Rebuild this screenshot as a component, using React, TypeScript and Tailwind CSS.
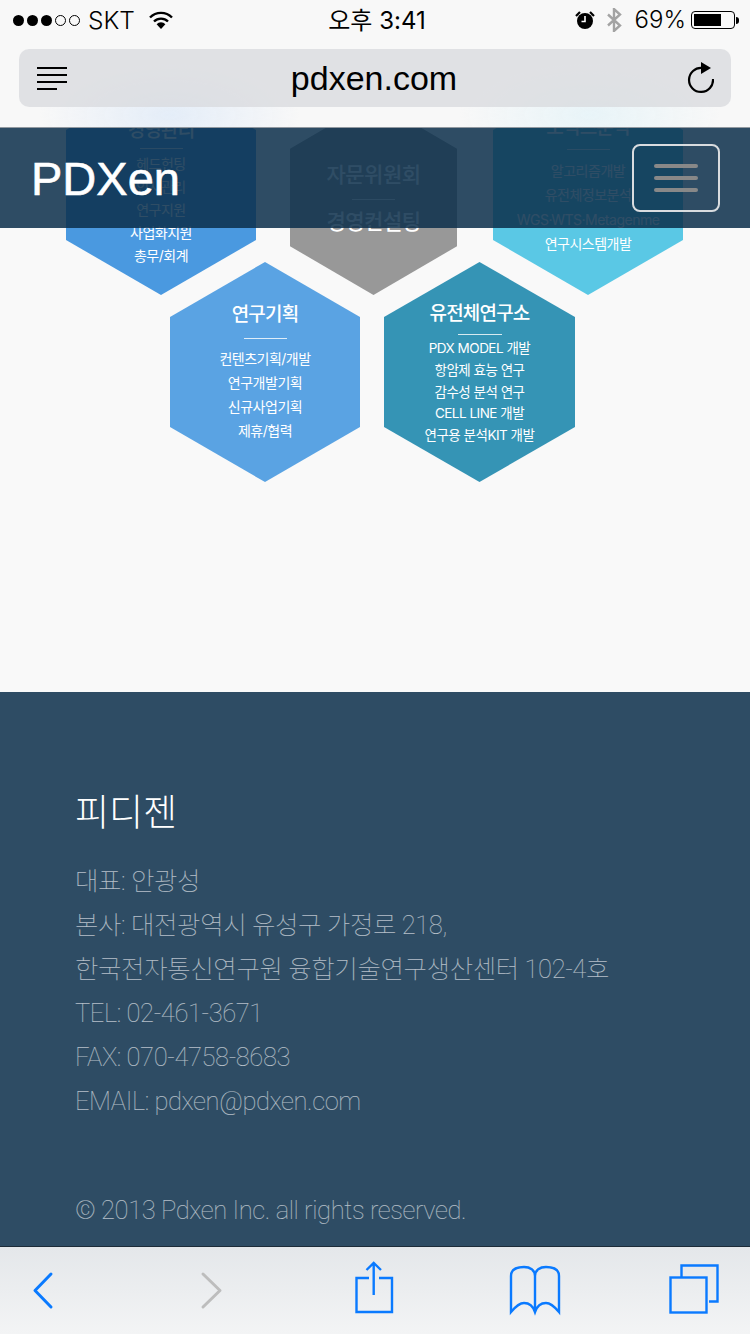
import React from "react";

const hexClip = "[clip-path:polygon(50%_0,100%_25%,100%_75%,50%_100%,0_75%,0_25%)]";

interface HexProps {
  title: string;
  items: string[];
  className: string;
  dividerClass: string;
  listClass: string;
}

const Hex: React.FC<HexProps> = ({ title, items, className, dividerClass, listClass }) => (
  <div className={`${hexClip} ${className} flex flex-col items-center text-white shrink-0`}>
    <div className="text-[19px] leading-[24px] font-medium tracking-[-0.8px]">{title}</div>
    <div className={`h-px bg-white/80 ${dividerClass}`} />
    <div className={`text-center tracking-[-0.5px] ${listClass}`}>
      {items.map((item) => (
        <div key={item}>{item}</div>
      ))}
    </div>
  </div>
);

const StatusBar = () => (
  <div className="h-[40px] flex items-center justify-between pl-[13px] pr-[11px] text-black">
    <div className="flex items-center w-[240px]">
      <div className="flex items-center gap-[3px]">
        <span className="w-[11px] h-[11px] rounded-full bg-black" />
        <span className="w-[11px] h-[11px] rounded-full bg-black" />
        <span className="w-[11px] h-[11px] rounded-full bg-black" />
        <span className="w-[11px] h-[11px] rounded-full border border-black" />
        <span className="w-[11px] h-[11px] rounded-full border border-black" />
      </div>
      <span className="ml-[8px] text-[24.500px] font-light leading-none">SKT</span>
      <svg className="ml-[14px]" width="24" height="18" viewBox="0 0 24 18">
        <path d="M1 6.500a15.500 15.500 0 0 1 22 0" fill="none" stroke="black" strokeWidth="2.400" />
        <path d="M5 10.500a10 10 0 0 1 14 0" fill="none" stroke="black" strokeWidth="2.400" />
        <path d="M7.600 13.200a6 6 0 0 1 8.800 0L12 18z" fill="black" />
      </svg>
    </div>
    <div className="mt-px ml-[2px] text-[24px] leading-none">오후 3:41</div>
    <div className="flex items-center justify-end w-[240px]">
      <svg width="20" height="18" viewBox="0 0 20 18">
        <circle cx="10" cy="10" r="8" fill="black" />
        <path d="M10 5v5.500H6.500" fill="none" stroke="white" strokeWidth="1.600" />
        <path d="M1 5l4-4M19 5l-4-4" stroke="black" strokeWidth="2.200" />
      </svg>
      <svg className="ml-[11px]" width="16" height="24" viewBox="0 0 16 24">
        <path d="M2 6.500l12 11-6 5.500V1l6 5.500-12 11" fill="none" stroke="#a3a3a3" strokeWidth="2.400" />
      </svg>
      <span className="ml-[13px] text-[24px] font-light leading-none">69%</span>
      <div className="ml-[5px] flex items-center">
        <div className="w-[44px] h-[18px] rounded-[4px] border border-black p-[2px]">
          <div className="h-full w-[27px] bg-black" />
        </div>
        <div className="ml-[1px] w-[3px] h-[7px] rounded-r-full bg-black" />
      </div>
    </div>
  </div>
);

const AddressBar = () => (
  <div className="mt-[9px] mx-[19px] h-[58px] rounded-[10px] bg-[#d8dade]/75 flex items-center justify-between pl-[18px] pr-[17px]">
    <div className="w-[30px] flex flex-col gap-[5px]">
      <div className="h-[2px] w-[30px] bg-black" />
      <div className="h-[2px] w-[30px] bg-black" />
      <div className="h-[2px] w-[30px] bg-black" />
      <div className="h-[2px] w-[20px] bg-black" />
    </div>
    <div className="mr-[5px] font-['Liberation_Sans',sans-serif] text-[34px] leading-none text-black">pdxen.com</div>
    <svg width="28" height="32" viewBox="0 0 28 32">
      <path d="M16 6A12 12 0 1 0 27 17" fill="none" stroke="black" strokeWidth="2.200" />
      <path d="M15 0l10 6-10 6z" fill="black" />
    </svg>
  </div>
);

const Navbar = () => (
  <div className="h-[100px] bg-[#0b2e4a]/85 flex items-center justify-between pl-[31px] pr-[30px]">
    <div className="font-['Liberation_Sans',sans-serif] [-webkit-text-stroke:0.6px_white] text-[47px] leading-none text-white">PDXen</div>
    <div className="w-[88px] h-[68px] rounded-[8px] border-2 border-[#d9dcdf] flex flex-col items-center justify-center gap-[8px]">
      <span className="block w-[44px] h-[4px] rounded-full bg-[#888888]" />
      <span className="block w-[44px] h-[4px] rounded-full bg-[#888888]" />
      <span className="block w-[44px] h-[4px] rounded-full bg-[#888888]" />
    </div>
  </div>
);

const Toolbar = () => (
  <div className="h-[88px] border-t border-[#1c2b38] bg-gradient-to-b from-[#e4e7ea] to-[#f3f4f5]">
    <svg width="750" height="87" viewBox="0 1247 750 87" fill="none" stroke="#0a7aff" strokeWidth="2.400">
      <path d="M51 1274L35 1290.500L51 1307" strokeWidth="3" strokeLinecap="round" strokeLinejoin="round" />
      <path d="M203 1274L220 1290.500L203 1307" stroke="#bdbdbd" strokeWidth="3" strokeLinecap="round" strokeLinejoin="round" />
      <path d="M369 1278H356.500V1312H392V1278H379" />
      <path d="M373.700 1295V1263M366.500 1270L373.700 1263L381 1270" />
      <path d="M535 1312V1276C535 1270 530 1267 524 1267C516 1267 511 1270 511 1276V1312C516 1306 520 1303 524 1303C529 1303 533 1306 535 1312C537 1306 541 1303 546 1303C550 1303 554 1306 559 1312V1276C559 1270 554 1267 546 1267C540 1267 535 1270 535 1276" />
      <rect x="670.500" y="1277.500" width="36" height="35" />
      <path d="M681.500 1277V1265.500H717.500V1301.500H709" />
    </svg>
  </div>
);

export default function App() {
  return (
    <div className="relative w-[750px] h-[1334px] overflow-hidden flex flex-col bg-[#f9f9f9] font-['Inter','Noto_Sans_CJK_KR',sans-serif]">
      {/* page content, runs under the browser chrome */}
      <div className="h-[692px] shrink-0 pt-[75px]">
        <div className="flex pl-[66px]">
          <Hex
            title="경영관리"
            items={["헤드헌팅", "인사관리", "연구지원", "사업화지원", "총무/회계"]}
            className="w-[190px] h-[220px] bg-[#4a99e0] pt-[44px]"
            dividerClass="w-[43px] mt-[5px]"
            listClass="mt-[3px] text-[14px] leading-[23px]"
          />
          <div className={`${hexClip} ml-[34px] mt-[25px] w-[167px] h-[195px] bg-[#989898] pt-[61px] flex flex-col items-center text-white shrink-0`}>
            <div className="text-[21px] leading-[28px] font-medium tracking-[-0.5px]">자문위원회</div>
            <div className="w-[43px] h-px bg-white/80 mt-[10px]" />
            <div className="text-[21px] leading-[28px] font-medium tracking-[-0.5px] mt-[8px]">경영컨설팅</div>
          </div>
          <Hex
            title="오믹스분석"
            items={["알고리즘개발", "유전체정보분석", "WGS·WTS·Metagenme", "연구시스템개발"]}
            className="ml-[36px] w-[190px] h-[220px] bg-[#5ac8e5] pt-[41px]"
            dividerClass="w-[43px] mt-[9px]"
            listClass="mt-[9px] text-[14px] leading-[24.300px]"
          />
        </div>
        <div className="flex pl-[170px] mt-[-33px]">
          <Hex
            title="연구기획"
            items={["컨텐츠기획/개발", "연구개발기획", "신규사업기획", "제휴/협력"]}
            className="w-[190px] h-[220px] bg-[#5aa3e3] pt-[41px]"
            dividerClass="w-[43px] mt-[11px]"
            listClass="mt-[8px] text-[14px] leading-[24px]"
          />
          <Hex
            title="유전체연구소"
            items={["PDX MODEL 개발", "항암제 효능 연구", "감수성 분석 연구", "CELL LINE 개발", "연구용 분석KIT 개발"]}
            className="ml-[24px] w-[191px] h-[220px] bg-[#3594b5] pt-[40px]"
            dividerClass="w-[44px] mt-[8px]"
            listClass="mt-[3px] text-[13.500px] leading-[21.750px]"
          />
        </div>
      </div>

      {/* footer */}
      <div className="flex-1 bg-[#2e4c64] pt-[100px] pl-[75px] font-['Roboto','Noto_Sans_CJK_KR',sans-serif] font-thin text-white/65 text-[25.500px] tracking-[-0.400px] leading-[44px]">
        <div className="text-[37px] font-light text-white tracking-normal">피디젠</div>
        <div className="mt-[23px]">
          <div>대표: 안광성</div>
          <div>본사: 대전광역시 유성구 가정로 218,</div>
          <div>한국전자통신연구원 융합기술연구생산센터 102-4호</div>
          <div>TEL: 02-461-3671</div>
          <div>FAX: 070-4758-8683</div>
          <div>EMAIL: pdxen@pdxen.com</div>
        </div>
        <div className="mt-[65px]">© 2013 Pdxen Inc. all rights reserved.</div>
      </div>

      <Toolbar />

      {/* browser chrome and fixed navbar, over the page; tints stand in for the blurred page behind it */}
      <div className="absolute top-0 inset-x-0">
        <div className="h-[128px] bg-[#f8f8f8] bg-[radial-gradient(ellipse_130px_55px_at_170px_115px,#e4edf8,transparent),radial-gradient(ellipse_130px_55px_at_590px_115px,#e8f4f8,transparent)] border-b border-[#2b3a47]/50">
          <StatusBar />
          <AddressBar />
        </div>
        <Navbar />
      </div>
    </div>
  );
}
